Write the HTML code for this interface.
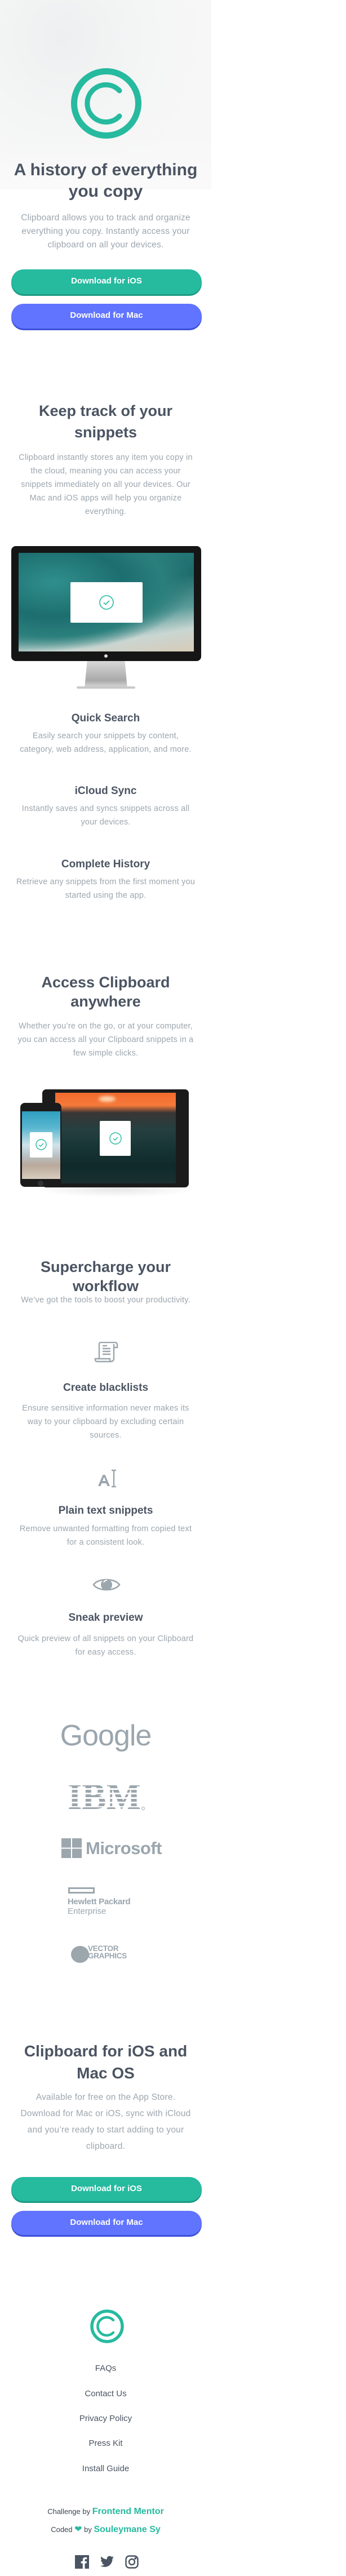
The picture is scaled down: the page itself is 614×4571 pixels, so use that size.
<!DOCTYPE html>
<html><head><meta charset="utf-8">
<style>
*{margin:0;padding:0;box-sizing:border-box}
html,body{width:614px;height:4571px;background:#fff;overflow:hidden}
body{position:relative;font-family:"Liberation Sans",sans-serif}
.a{position:absolute}
.t{position:absolute;left:0;width:375px;text-align:center;white-space:nowrap}
.h1{font-size:30px;line-height:38px;font-weight:700;color:#4b5462}
.h2{font-size:27px;line-height:38px;font-weight:700;color:#4b5462}
.h3{font-size:19px;line-height:24px;font-weight:700;color:#4b5462}
.p{font-size:14.5px;line-height:24px;color:#9da6ae;letter-spacing:.2px}
.btn{position:absolute;left:20px;width:338px;height:44px;border-radius:22px;color:#fff;font-size:15px;font-weight:700;text-align:center;line-height:42px}
.ios{background:#26ba9f;box-shadow:0 3px 0 #1c9a83}
.mac{background:#6174ff;box-shadow:0 3px 0 #3c4fd8}
.lk{font-size:15px;color:#4b5462}
.logo{color:#9ba6ae}
</style></head><body>

<!-- hero bg -->
<div class="a" style="left:0;top:0;width:375px;height:336px;background:radial-gradient(ellipse at 30% 20%,#eeeff0 0%,#f4f5f5 40%,#f7f7f7 70%),#f5f5f5"></div>
<div class="a" style="left:0;top:240px;width:375px;height:96px;background:linear-gradient(#f6f6f600,#fafafa)"></div>

<svg class="a" style="left:126px;top:121px" width="125" height="125" viewBox="0 0 125 125">
<circle cx="62.5" cy="62.5" r="57" fill="none" stroke="#26ba9f" stroke-width="11"/>
<path d="M86 40 A33 33 0 1 0 86 85" fill="none" stroke="#26ba9f" stroke-width="9" stroke-linecap="round"/>
</svg>

<div class="t h1" style="top:283px">A history of everything<br>you copy</div>
<div class="t p" style="top:375px;font-size:15.5px">Clipboard allows you to track and organize<br>everything you copy. Instantly access your<br>clipboard on all your devices.</div>
<div class="btn ios" style="top:478px">Download for iOS</div>
<div class="btn mac" style="top:539px">Download for Mac</div>

<div class="t h2" style="top:710px">Keep track of your<br>snippets</div>
<div class="t p" style="top:800px">Clipboard instantly stores any item you copy in<br>the cloud, meaning you can access your<br>snippets immediately on all your devices. Our<br>Mac and iOS apps will help you organize<br>everything.</div>

<!-- monitor -->
<div class="a" style="left:20px;top:969px;width:337px;height:204px;background:#151515;border-radius:8px"></div>
<div class="a" style="left:33px;top:981px;width:311px;height:175px;background:radial-gradient(ellipse at 20% 30%,#2f8f8c 0%,#1d6e6f 35%,#2a7f7c 55%,transparent 70%),linear-gradient(170deg,#2b8583 0%,#1f6b6c 40%,#5b9c9a 65%,#c9d6d2 82%,#d8cbb8 100%)"></div>
<div class="a" style="left:125px;top:1033px;width:128px;height:72px;background:#fff;border-radius:2px"></div>
<svg class="a" style="left:175px;top:1055px" width="28" height="28" viewBox="0 0 28 28"><circle cx="14" cy="14" r="12" fill="none" stroke="#26ba9f" stroke-width="1.6"/><path d="M9 14.5l3.5 3 6.5-6.5" fill="none" stroke="#26ba9f" stroke-width="1.6"/></svg>
<div class="a" style="left:185px;top:1161px;width:6px;height:6px;border-radius:50%;background:#ddd"></div>
<div class="a" style="left:150px;top:1173px;width:76px;height:49px;background:linear-gradient(#d8d8d8,#a9a9a9 70%,#e2e2e2);clip-path:polygon(6% 0,94% 0,100% 100%,0 100%)"></div>
<div class="a" style="left:136px;top:1218px;width:104px;height:4px;background:#c8c8c8;border-radius:2px"></div>

<div class="t h3" style="top:1263px">Quick Search</div>
<div class="t p" style="top:1294px">Easily search your snippets by content,<br>category, web address, application, and more.</div>
<div class="t h3" style="top:1392px">iCloud Sync</div>
<div class="t p" style="top:1423px">Instantly saves and syncs snippets across all<br>your devices.</div>
<div class="t h3" style="top:1522px">Complete History</div>
<div class="t p" style="top:1553px">Retrieve any snippets from the first moment you<br>started using the app.</div>

<div class="t h2" style="top:1726px;line-height:34px">Access Clipboard<br>anywhere</div>
<div class="t p" style="top:1809px">Whether you’re on the go, or at your computer,<br>you can access all your Clipboard snippets in a<br>few simple clicks.</div>

<!-- devices -->
<div class="a" style="left:60px;top:2095px;width:290px;height:30px;background:radial-gradient(ellipse,#00000018,transparent 70%)"></div>
<div class="a" style="left:75px;top:1933px;width:260px;height:174px;background:#1b1b1b;border-radius:7px"></div>
<div class="a" style="left:98px;top:1939px;width:214px;height:161px;background:linear-gradient(#f26a2e 0%,#f57a3a 14%,#3a3535 22%,#25403f 40%,#183536 60%,#0f2a2b 80%,#1a2f30 100%)"></div>
<div class="a" style="left:175px;top:1945px;width:30px;height:10px;border-radius:50%;background:#ffd7b0;filter:blur(3px)"></div>
<div class="a" style="left:177px;top:1989px;width:55px;height:62px;background:#fff;border-radius:2px"></div>
<svg class="a" style="left:193px;top:2008px" width="24" height="24" viewBox="0 0 24 24"><circle cx="12" cy="12" r="10" fill="none" stroke="#26ba9f" stroke-width="1.4"/><path d="M8 12.5l3 2.5 5-5" fill="none" stroke="#26ba9f" stroke-width="1.4"/></svg>
<div class="a" style="left:36px;top:1957px;width:73px;height:149px;background:#1b1b1b;border-radius:8px"></div>
<div class="a" style="left:39px;top:1972px;width:68px;height:120px;background:linear-gradient(#2f9fc0 0%,#5bb7d0 25%,#cfe3ea 50%,#b9c3c6 65%,#b9a99a 80%,#d8cdbf 100%)"></div>
<div class="a" style="left:53px;top:2009px;width:40px;height:45px;background:#fff;border-radius:2px"></div>
<svg class="a" style="left:62px;top:2020px" width="22" height="22" viewBox="0 0 22 22"><circle cx="11" cy="11" r="9" fill="none" stroke="#26ba9f" stroke-width="1.4"/><path d="M7 11.5l3 2.5 5-5" fill="none" stroke="#26ba9f" stroke-width="1.4"/></svg>
<div class="a" style="left:67px;top:2095px;width:10px;height:10px;border-radius:50%;background:#333"></div>

<div class="t h2" style="top:2231px;line-height:34px">Supercharge your<br>workflow</div>
<div class="t p" style="top:2295px">We’ve got the tools to boost your productivity.</div>

<svg class="a" style="left:167px;top:2381px" width="44" height="38" viewBox="0 0 44 38" fill="none" stroke="#9ca6ad" stroke-width="2.4">
<path d="M9 30V4a3 3 0 0 1 3-3h25a4 4 0 0 1 4 4v5h-6"/><path d="M35 4v26a5 5 0 0 1-5 5H5a3 3 0 0 1-3-3v-2h26v2a3 3 0 0 0 3 3"/>
<path d="M15 7h8M15 12h14M15 17h14M15 22h14"/></svg>
<div class="t h3" style="top:2451px">Create blacklists</div>
<div class="t p" style="top:2487px">Ensure sensitive information never makes its<br>way to your clipboard by excluding certain<br>sources.</div>

<svg class="a" style="left:172px;top:2607px" width="36" height="33" viewBox="0 0 36 33">
<path d="M2 30L10.5 10h4L23 30h-4.5l-2-5h-8l-2 5z M10 21h5.5l-2.8-7z" fill="#9ca6ad" fill-rule="evenodd"/>
<path d="M26 2h8M30 2v29M26 31h8" stroke="#9ca6ad" stroke-width="2.4" fill="none"/></svg>
<div class="t h3" style="top:2669px">Plain text snippets</div>
<div class="t p" style="top:2701px">Remove unwanted formatting from copied text<br>for a consistent look.</div>

<svg class="a" style="left:164px;top:2796px" width="50" height="32" viewBox="0 0 50 32">
<path d="M2 16C10 4 40 4 48 16C40 28 10 28 2 16z" fill="none" stroke="#9ca6ad" stroke-width="2.6"/>
<circle cx="25" cy="16" r="10" fill="#9ca6ad"/><path d="M20 12a6 6 0 0 1 6-4" stroke="#fff" stroke-width="2" fill="none"/></svg>
<div class="t h3" style="top:2859px">Sneak preview</div>
<div class="t p" style="top:2896px">Quick preview of all snippets on your Clipboard<br>for easy access.</div>

<!-- logos -->
<div class="t logo" style="top:3050px;font-size:52px;line-height:60px;letter-spacing:-1px">Google</div>
<svg class="a" style="left:120px;top:3160px" width="140" height="52" viewBox="0 0 140 52">
<defs><clipPath id="ibm"><text x="0" y="50" font-family="Liberation Serif" font-weight="700" font-size="66" textLength="130" lengthAdjust="spacingAndGlyphs">IBM</text></clipPath></defs>
<g clip-path="url(#ibm)" fill="#9ca6ad"><rect y="0" width="140" height="5"/><rect y="8" width="140" height="5"/><rect y="16" width="140" height="5"/><rect y="24" width="140" height="5"/><rect y="32" width="140" height="5"/><rect y="40" width="140" height="5"/><rect y="47" width="140" height="5"/></g>
<circle cx="134" cy="49" r="2.5" fill="none" stroke="#9ca6ad"/></svg>
<svg class="a" style="left:109px;top:3262px" width="36" height="35" viewBox="0 0 36 35" fill="#9ca6ad"><rect width="17" height="16.5"/><rect x="19" width="17" height="16.5"/><rect y="18.5" width="17" height="16.5"/><rect x="19" y="18.5" width="17" height="16.5"/></svg>
<div class="a logo" style="left:152px;top:3262px;font-size:31px;line-height:36px;font-weight:700;letter-spacing:-.5px">Microsoft</div>
<div class="a" style="left:121px;top:3349px;width:47px;height:11px;border:3px solid #9ca6ad"></div>
<div class="a logo" style="left:120px;top:3366px;font-size:15px;line-height:17px;font-weight:700;letter-spacing:-.3px">Hewlett Packard</div>
<div class="a logo" style="left:120px;top:3383px;font-size:15px;line-height:17px">Enterprise</div>
<div class="a" style="left:126px;top:3453px;width:32px;height:30px;border-radius:50%;background:#9ca6ad"></div>
<div class="a logo" style="left:156px;top:3451px;font-size:13.5px;line-height:13px;font-weight:700;letter-spacing:-.3px">VECTOR<br>GRAPHICS</div>

<div class="t h2" style="top:3620px;line-height:39px;font-size:28px">Clipboard for iOS and<br>Mac OS</div>
<div class="t p" style="top:3707px;font-size:15.5px;line-height:29px">Available for free on the App Store.<br>Download for Mac or iOS, sync with iCloud<br>and you’re ready to start adding to your<br>clipboard.</div>
<div class="btn ios" style="top:3863px;height:43px">Download for iOS</div>
<div class="btn mac" style="top:3923px;height:43px">Download for Mac</div>

<svg class="a" style="left:160px;top:4098px" width="60" height="60" viewBox="0 0 60 60">
<circle cx="30" cy="30" r="27" fill="none" stroke="#26ba9f" stroke-width="5.5"/>
<path d="M41 19A16 16 0 1 0 41 41" fill="none" stroke="#26ba9f" stroke-width="4.5" stroke-linecap="round"/></svg>

<div class="t lk" style="top:4194px">FAQs</div>
<div class="t lk" style="top:4239px">Contact Us</div>
<div class="t lk" style="top:4283px">Privacy Policy</div>
<div class="t lk" style="top:4327px">Press Kit</div>
<div class="t lk" style="top:4372px">Install Guide</div>

<div class="t" style="top:4447px;font-size:13px;line-height:20px;color:#3d4450">Challenge by <span style="color:#26ba9f;font-size:16px;font-weight:700">Frontend Mentor</span></div>
<div class="t" style="top:4479px;font-size:13px;line-height:20px;color:#3d4450">Coded <span style="color:#26ba9f;font-size:16px">&#10084;</span> by <span style="color:#26ba9f;font-size:16px;font-weight:700">Souleymane Sy</span></div>

<svg class="a" style="left:133px;top:4534px" width="25" height="24" viewBox="0 0 25 24"><rect width="25" height="24" fill="#4b5462"/><path d="M17.5 24V14.5h3l.5-3.5h-3.5V8.8c0-1 .3-1.7 1.8-1.7h1.9V4a25 25 0 0 0-2.8-.2c-2.8 0-4.6 1.7-4.6 4.8V11H10.7v3.5h3.1V24z" fill="#fff"/></svg>
<svg class="a" style="left:178px;top:4535px" width="24" height="21" viewBox="0 0 24 20"><path d="M24 2.4a10 10 0 0 1-2.8.8A5 5 0 0 0 23.3.4a10 10 0 0 1-3.1 1.2A4.9 4.9 0 0 0 11.8 6 14 14 0 0 1 1.7.9a4.9 4.9 0 0 0 1.5 6.6 5 5 0 0 1-2.2-.6 4.9 4.9 0 0 0 3.9 4.9 5 5 0 0 1-2.2.1 4.9 4.9 0 0 0 4.6 3.4A9.9 9.9 0 0 1 0 17.3 14 14 0 0 0 7.5 19.5c9.1 0 14-7.5 14-14v-.6A10 10 0 0 0 24 2.4z" fill="#4b5462"/></svg>
<svg class="a" style="left:222px;top:4534px" width="24" height="24" viewBox="0 0 24 24" fill="none" stroke="#4b5462" stroke-width="2.4"><rect x="1.5" y="1.5" width="21" height="21" rx="6"/><circle cx="12" cy="12" r="5"/><circle cx="18.2" cy="5.8" r=".8" fill="#4b5462"/></svg>

</body></html>
